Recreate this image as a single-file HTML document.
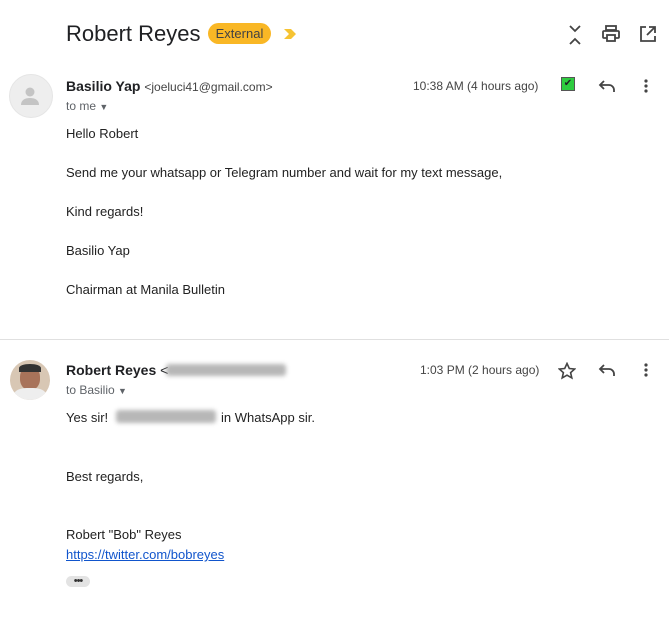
<!DOCTYPE html>
<html><head><meta charset="utf-8"><style>
body{margin:0;width:669px;height:620px;background:#fff;font-family:"Liberation Sans",Arial,sans-serif;color:#202124;position:relative;overflow:hidden}
.a{position:absolute;white-space:nowrap}
.t{font-size:13px;color:#222}
.blur{position:absolute;background:#999;filter:blur(2px);border-radius:3px;opacity:.7}
</style></head><body>
<div class="a" style="left:66px;top:21px;font-size:22px;color:#202124">Robert Reyes</div>
<div class="a" style="left:208px;top:23px;width:63px;height:21px;background:#f9ab00;opacity:.85;border-radius:11px;font-size:13px;line-height:21px;text-align:center;color:#202124">External</div>
<svg class="a" style="left:283px;top:28px" width="14" height="12"><path d="M1 1h7l5 5-5 5H1l5-5z" fill="#f4b400" opacity=".8"/></svg>
<svg class="a" style="left:566px;top:24px" width="18" height="22" fill="none" stroke="#444" stroke-width="1.8"><path d="M4 2l5 5 5-5M4 20l5-5 5 5"/></svg>
<svg class="a" style="left:602px;top:25px" width="18" height="18" fill="none" stroke="#444" stroke-width="1.8"><rect x="4" y="1" width="10" height="4"/><rect x="1" y="6" width="16" height="7" rx="1"/><rect x="5" y="10" width="8" height="6" fill="#fff"/></svg>
<svg class="a" style="left:639px;top:25px" width="18" height="18" fill="none" stroke="#444" stroke-width="1.8"><path d="M7 2H2v14h14v-5M10 2h6v6M16 2L8 10"/></svg>

<div class="a" style="left:9px;top:74px;width:42px;height:42px;border-radius:50%;background:#eee;border:1px solid #e5e5e5"></div>
<svg class="a" style="left:20px;top:86px" width="20" height="20" fill="#c4c4c4"><circle cx="10" cy="6" r="4.5"/><path d="M1 19c0-5 4-7 9-7s9 2 9 7z"/></svg>
<div class="a" style="left:66px;top:78px;font-size:14px"><b>Basilio Yap</b> <span style="font-size:12px;color:#444">&lt;joeluci41@gmail.com&gt;</span></div>
<div class="a" style="left:66px;top:99px;font-size:12px;color:#5f6368">to me <span style="font-size:9px">▼</span></div>
<div class="a" style="left:413px;top:79px;font-size:12px;color:#444">10:38 AM (4 hours ago)</div>
<div class="a" style="left:561px;top:77px;width:12px;height:12px;background:#2ecc40;border:1px solid #555;font-size:10px;line-height:12px;text-align:center">✔</div>
<svg class="a" style="left:598px;top:78px" width="18" height="16" fill="none" stroke="#444" stroke-width="1.8"><path d="M6 3L2 7l4 4M2 7h9a5 5 0 015 5v2"/></svg>
<svg class="a" style="left:644px;top:79px" width="4" height="14" fill="#444"><circle cx="2" cy="2" r="1.6"/><circle cx="2" cy="7" r="1.6"/><circle cx="2" cy="12" r="1.6"/></svg>

<div class="a t" style="left:66px;top:126px">Hello Robert</div>
<div class="a t" style="left:66px;top:165px">Send me your whatsapp or Telegram number and wait for my text message,</div>
<div class="a t" style="left:66px;top:204px">Kind regards!</div>
<div class="a t" style="left:66px;top:243px">Basilio Yap</div>
<div class="a t" style="left:66px;top:282px">Chairman at Manila Bulletin</div>

<div class="a" style="left:0;top:339px;width:669px;height:1px;background:#e0e0e0"></div>

<div class="a" style="left:10px;top:360px;width:40px;height:40px;border-radius:50%;background:#d8c7b4;overflow:hidden">
<div style="position:absolute;left:10px;top:6px;width:20px;height:24px;border-radius:45%;background:#a8735a"></div>
<div style="position:absolute;left:9px;top:4px;width:22px;height:8px;border-radius:50% 50% 0 0;background:#333"></div>
<div style="position:absolute;left:4px;top:28px;width:32px;height:16px;border-radius:40% 40% 0 0;background:#eee"></div></div>
<div class="a" style="left:66px;top:362px;font-size:14px"><b>Robert Reyes</b> &lt;</div>
<div class="blur" style="left:166px;top:364px;width:120px;height:12px"></div>
<div class="a" style="left:66px;top:383px;font-size:12px;color:#5f6368">to Basilio <span style="font-size:9px">▼</span></div>
<div class="a" style="left:420px;top:363px;font-size:12px;color:#444">1:03 PM (2 hours ago)</div>
<svg class="a" style="left:558px;top:362px" width="18" height="18" fill="none" stroke="#444" stroke-width="1.6"><path d="M9 1.5l2.3 5 5.4.5-4.1 3.6 1.2 5.3L9 13.2 4.2 15.9l1.2-5.3L1.3 7l5.4-.5z"/></svg>
<svg class="a" style="left:598px;top:362px" width="18" height="16" fill="none" stroke="#444" stroke-width="1.8"><path d="M6 3L2 7l4 4M2 7h9a5 5 0 015 5v2"/></svg>
<svg class="a" style="left:644px;top:363px" width="4" height="14" fill="#444"><circle cx="2" cy="2" r="1.6"/><circle cx="2" cy="7" r="1.6"/><circle cx="2" cy="12" r="1.6"/></svg>

<div class="a t" style="left:66px;top:410px">Yes sir!</div>
<div class="a t" style="left:221px;top:410px">in WhatsApp sir.</div>
<div class="blur" style="left:116px;top:410px;width:100px;height:13px"></div>
<div class="a t" style="left:66px;top:469px">Best regards,</div>
<div class="a t" style="left:66px;top:527px">Robert "Bob" Reyes</div>
<div class="a t" style="left:66px;top:547px;color:#15c;text-decoration:underline">https://twitter.com/bobreyes</div>
<div class="a" style="left:66px;top:576px;width:24px;height:11px;border-radius:6px;background:#e3e3e3;font-size:11px;line-height:10px;text-align:center;color:#333;letter-spacing:-1px">•••</div>
</body></html>
